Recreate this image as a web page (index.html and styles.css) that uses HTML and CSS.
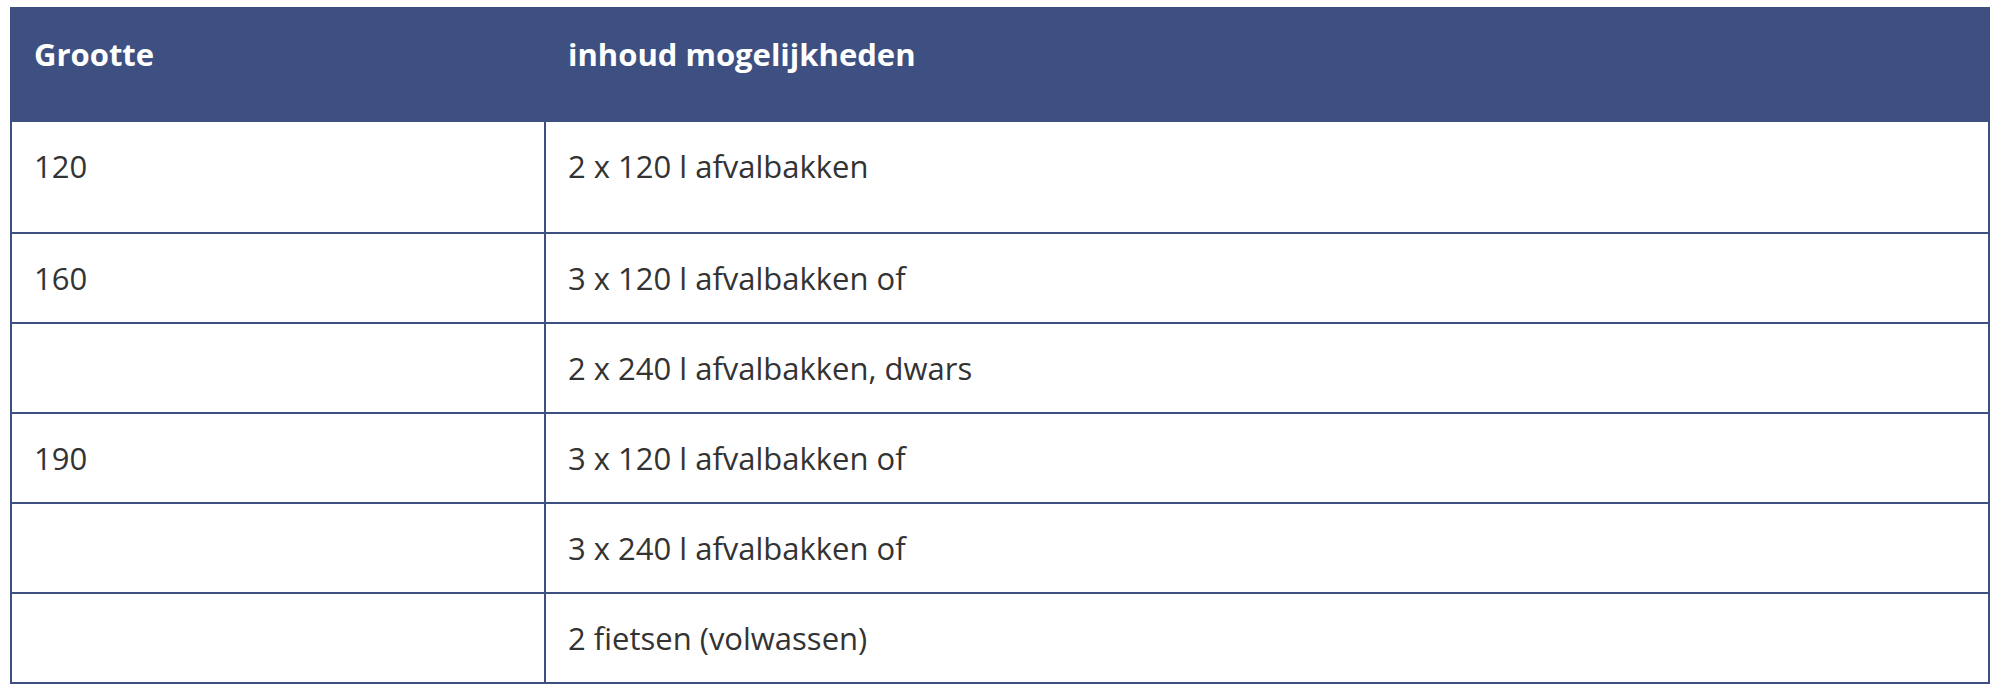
FILE: index.html
```html
<!DOCTYPE html>
<html lang="nl">
<head>
<meta charset="utf-8">
<title>Grootte</title>
<link rel="stylesheet" href="styles.css">
</head>
<body>
<table class="sizes">
  <colgroup>
    <col class="col-size">
    <col class="col-content">
  </colgroup>
  <thead>
    <tr>
      <th>Grootte</th>
      <th>inhoud mogelijkheden</th>
    </tr>
  </thead>
  <tbody>
    <tr class="row-tall">
      <td>120</td>
      <td>2 x 120 l afvalbakken</td>
    </tr>
    <tr>
      <td>160</td>
      <td>3 x 120 l afvalbakken of</td>
    </tr>
    <tr>
      <td></td>
      <td>2 x 240 l afvalbakken, dwars</td>
    </tr>
    <tr>
      <td>190</td>
      <td>3 x 120 l afvalbakken of</td>
    </tr>
    <tr>
      <td></td>
      <td>3 x 240 l afvalbakken of</td>
    </tr>
    <tr>
      <td></td>
      <td>2 fietsen (volwassen)</td>
    </tr>
  </tbody>
</table>
</body>
</html>
```

FILE: styles.css
```css
html, body {
  margin: 0;
  padding: 0;
  background: #ffffff;
}

body {
  padding: 7px 10px;
  font-family: "Open Sans", "Noto Sans", sans-serif;
  color: #333333;
}

.sizes {
  width: 1980px;
  border-collapse: collapse;
  table-layout: fixed;
  font-size: 31px;
  line-height: 48px;
}

.col-size {
  width: 534px;
}

.sizes th {
  background: #3d5081;
  color: #ffffff;
  font-weight: 700;
  text-align: left;
  padding: 21px 22px 42px;
  border: 2px solid #3d5081;
  vertical-align: top;
}

.sizes td {
  padding: 20px 22px;
  border: 2px solid #3d5081;
  vertical-align: top;
  height: 48px;
}

.sizes .row-tall td {
  padding-bottom: 42px;
}
```
